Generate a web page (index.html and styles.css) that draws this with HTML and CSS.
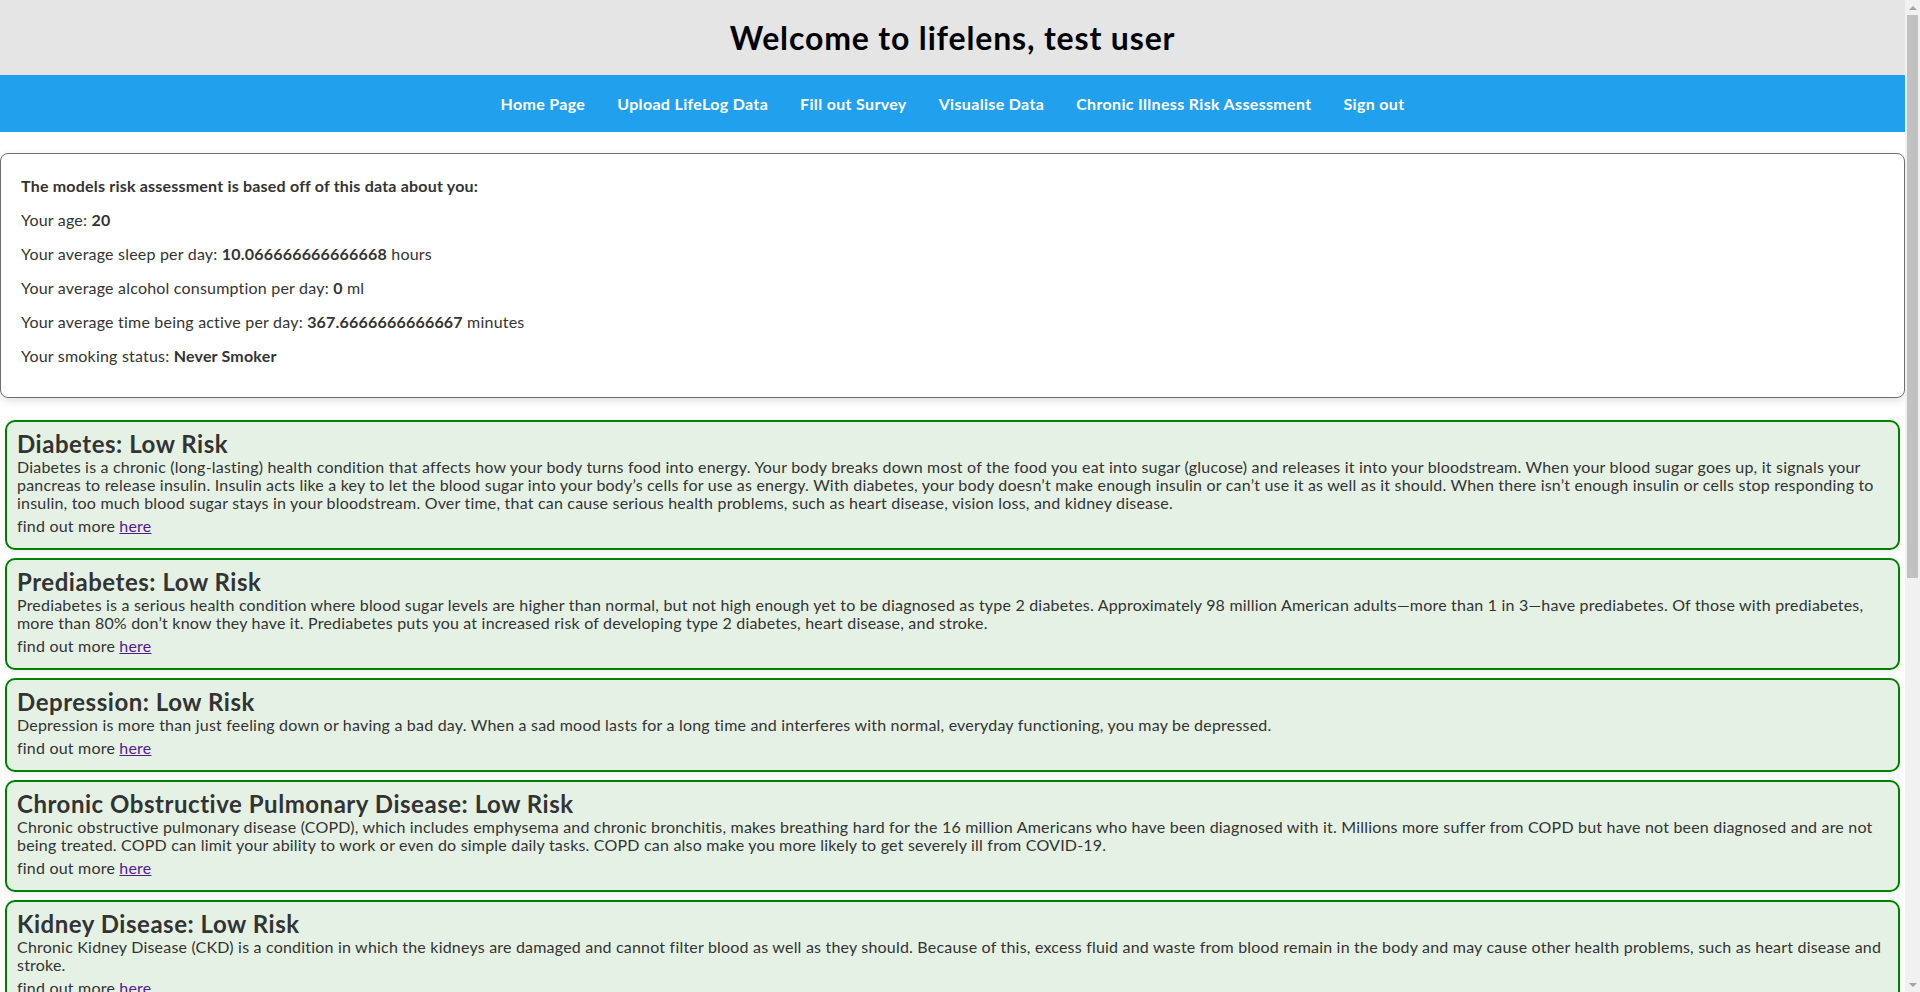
FILE: index.html
```html
<!DOCTYPE html>
<html lang="en">
<head>
<meta charset="utf-8">
<title>lifelens - Chronic Illness Risk Assessment</title>
<link rel="stylesheet" href="styles.css">
</head>
<body>
<header class="site-header">
  <h1 class="site-title">Welcome to lifelens, test user</h1>
</header>
<nav class="main-nav">
  <a class="nav-link" href="#">Home Page</a>
  <a class="nav-link" href="#">Upload LifeLog Data</a>
  <a class="nav-link" href="#">Fill out Survey</a>
  <a class="nav-link" href="#">Visualise Data</a>
  <a class="nav-link" href="#">Chronic Illness Risk Assessment</a>
  <a class="nav-link" href="#">Sign out</a>
</nav>
<main class="content">
  <section class="data-box">
    <p class="data-line data-title">The models risk assessment is based off of this data about you:</p>
    <p class="data-line">Your age: <b>20</b></p>
    <p class="data-line">Your average sleep per day: <b>10.066666666666668</b> hours</p>
    <p class="data-line">Your average alcohol consumption per day: <b>0</b> ml</p>
    <p class="data-line">Your average time being active per day: <b>367.6666666666667</b> minutes</p>
    <p class="data-line">Your smoking status: <b>Never Smoker</b></p>
  </section>

  <section class="risk-card">
    <h2 class="risk-title">Diabetes: Low Risk</h2>
    <p class="risk-text">Diabetes is a chronic (long-lasting) health condition that affects how your body turns food into energy. Your body breaks down most of the food you eat into sugar (glucose) and releases it into your bloodstream. When your blood sugar goes up, it signals your pancreas to release insulin. Insulin acts like a key to let the blood sugar into your body’s cells for use as energy. With diabetes, your body doesn’t make enough insulin or can’t use it as well as it should. When there isn’t enough insulin or cells stop responding to insulin, too much blood sugar stays in your bloodstream. Over time, that can cause serious health problems, such as heart disease, vision loss, and kidney disease.</p>
    <p class="risk-more">find out more <a class="risk-link" href="#">here</a></p>
  </section>

  <section class="risk-card">
    <h2 class="risk-title">Prediabetes: Low Risk</h2>
    <p class="risk-text">Prediabetes is a serious health condition where blood sugar levels are higher than normal, but not high enough yet to be diagnosed as type 2 diabetes. Approximately 98 million American adults—more than 1 in 3—have prediabetes. Of those with prediabetes, more than 80% don’t know they have it. Prediabetes puts you at increased risk of developing type 2 diabetes, heart disease, and stroke.</p>
    <p class="risk-more">find out more <a class="risk-link" href="#">here</a></p>
  </section>

  <section class="risk-card">
    <h2 class="risk-title">Depression: Low Risk</h2>
    <p class="risk-text">Depression is more than just feeling down or having a bad day. When a sad mood lasts for a long time and interferes with normal, everyday functioning, you may be depressed.</p>
    <p class="risk-more">find out more <a class="risk-link" href="#">here</a></p>
  </section>

  <section class="risk-card">
    <h2 class="risk-title">Chronic Obstructive Pulmonary Disease: Low Risk</h2>
    <p class="risk-text">Chronic obstructive pulmonary disease (COPD), which includes emphysema and chronic bronchitis, makes breathing hard for the 16 million Americans who have been diagnosed with it. Millions more suffer from COPD but have not been diagnosed and are not being treated. COPD can limit your ability to work or even do simple daily tasks. COPD can also make you more likely to get severely ill from COVID-19.</p>
    <p class="risk-more">find out more <a class="risk-link" href="#">here</a></p>
  </section>

  <section class="risk-card">
    <h2 class="risk-title">Kidney Disease: Low Risk</h2>
    <p class="risk-text">Chronic Kidney Disease (CKD) is a condition in which the kidneys are damaged and cannot filter blood as well as they should. Because of this, excess fluid and waste from blood remain in the body and may cause other health problems, such as heart disease and stroke.</p>
    <p class="risk-more">find out more <a class="risk-link" href="#">here</a></p>
  </section>

  <section class="risk-card">
    <h2 class="risk-title">Heart Disease: Low Risk</h2>
    <p class="risk-text">Heart disease is the leading cause of death for men, women, and people of most racial and ethnic groups. Coronary artery disease is the most common type of heart disease and can cause a heart attack.</p>
    <p class="risk-more">find out more <a class="risk-link" href="#">here</a></p>
  </section>

  <section class="risk-card">
    <h2 class="risk-title">Stroke: Low Risk</h2>
    <p class="risk-text">A stroke, sometimes called a brain attack, occurs when something blocks blood supply to part of the brain or when a blood vessel in the brain bursts. In either case, parts of the brain become damaged or die. A stroke can cause lasting brain damage, long-term disability, or even death.</p>
    <p class="risk-more">find out more <a class="risk-link" href="#">here</a></p>
  </section>

  <section class="risk-card">
    <h2 class="risk-title">Arthritis: Low Risk</h2>
    <p class="risk-text">Arthritis is inflammation or swelling of one or more joints. It describes more than 100 conditions that affect the joints, tissues around the joint, and other connective tissues.</p>
    <p class="risk-more">find out more <a class="risk-link" href="#">here</a></p>
  </section>

  <section class="risk-card">
    <h2 class="risk-title">Asthma: Low Risk</h2>
    <p class="risk-text">Asthma is a disease that affects your lungs. It causes repeated episodes of wheezing, breathlessness, chest tightness, and nighttime or early morning coughing.</p>
    <p class="risk-more">find out more <a class="risk-link" href="#">here</a></p>
  </section>
</main>
<div class="scrollbar" aria-hidden="true">
  <div class="scroll-btn"><span class="arrow-up"></span></div>
  <div class="scroll-track"><div class="scroll-thumb"></div></div>
  <div class="scroll-btn"><span class="arrow-down"></span></div>
</div>
</body>
</html>
```
FILE: styles.css
```css
html, body {
  margin: 0;
  padding: 0;
}

body {
  margin-right: 15px;
  font-family: Lato, "Open Sans", "Liberation Sans", sans-serif;
  font-size: 16px;
  letter-spacing: 0.2px;
  color: #333333;
  background: #ffffff;
}

.site-header {
  height: 75px;
  background: #e5e5e5;
  display: flex;
  align-items: center;
  justify-content: center;
}

.site-title {
  margin: 0;
  font-size: 32px;
  line-height: 38px;
  font-weight: 700;
  letter-spacing: 0.85px;
  color: #000000;
}

.main-nav {
  height: 57px;
  background: #21a0ed;
  display: flex;
  align-items: center;
  justify-content: center;
}

.nav-link {
  color: #ffffff;
  text-decoration: none;
  font-weight: 700;
  font-size: 16px;
  line-height: 20px;
  letter-spacing: 0.33px;
  padding: 0 16px;
}

.content {
  padding-top: 21px;
}

.data-box {
  border: 1px solid #6e6e6e;
  border-radius: 8px;
  padding: 7px 20px 16px;
  box-shadow: 0 3px 8px rgba(0, 0, 0, 0.12);
  margin-bottom: 22px;
}

.data-line {
  margin: 16px 0;
  line-height: 18px;
}

.data-title {
  font-weight: 700;
}

.risk-card {
  margin: 0 5px 8px;
  border: 2px solid #008000;
  border-radius: 10px;
  background: #e5f1e5;
  padding: 7px 10px 13px;
  box-shadow: 0 3px 8px rgba(0, 0, 0, 0.08);
}

.risk-title {
  margin: 0;
  font-size: 24px;
  line-height: 29px;
  font-weight: 700;
  letter-spacing: 0.53px;
}

.risk-text {
  margin: 0;
  line-height: 18px;
}

.risk-more {
  margin: 5px 0 0;
  line-height: 18px;
}

.risk-link {
  color: #551a8b;
  text-decoration: underline;
}

/* browser scrollbar as seen in the screenshot */
.scrollbar {
  position: fixed;
  top: 0;
  right: 0;
  width: 15px;
  height: 100vh;
  background: #f1f1f1;
  display: flex;
  flex-direction: column;
}

.scroll-btn {
  height: 15px;
  flex: none;
  display: flex;
  align-items: center;
  justify-content: center;
}

.arrow-up {
  width: 0;
  height: 0;
  border-left: 4px solid transparent;
  border-right: 4px solid transparent;
  border-bottom: 4px solid #a3a3a3;
}

.arrow-down {
  width: 0;
  height: 0;
  border-left: 4px solid transparent;
  border-right: 4px solid transparent;
  border-top: 4px solid #a3a3a3;
}

.scroll-track {
  flex: 1;
  padding: 0 2px;
}

.scroll-thumb {
  height: 563px;
  background: #c1c1c1;
}
```
